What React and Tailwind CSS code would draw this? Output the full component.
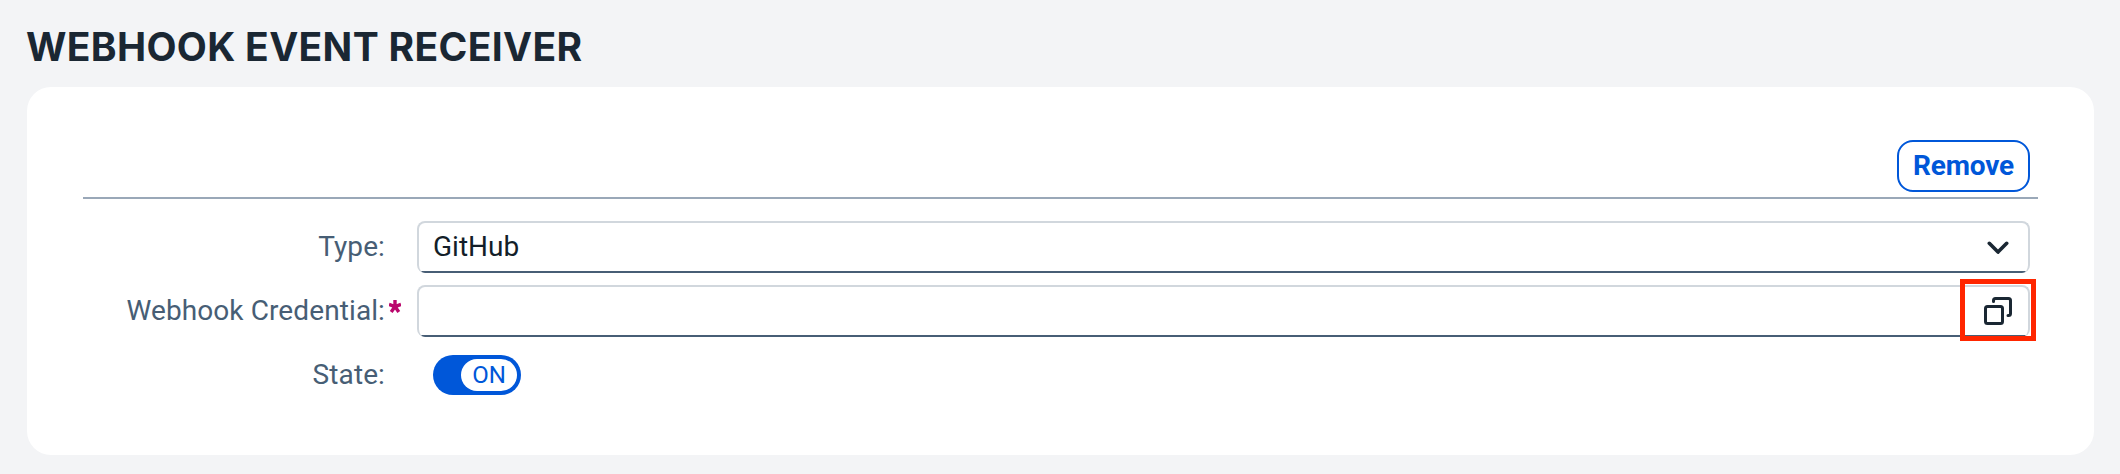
function FormRow({ label, required, children }) {
  return (
    <div className="flex h-16 items-center">
      <div className="relative flex w-[302px] shrink-0 justify-end text-[28px] leading-8 tracking-[0.1px] text-[#475e75]">
        <span className="whitespace-nowrap">{label}</span>
        {required && (
          <svg className="absolute top-[5px] left-[306px]" width="12" height="13" viewBox="0 0 12 13" fill="none" stroke="#ba066c" strokeWidth="3.4">
            <path d="M6 0v6.6M0 4.4l6 2.2M12 4.4l-6 2.2M2.2 12L6 6.6M9.8 12L6 6.6" />
          </svg>
        )}
      </div>
      <div className="ml-[32px] flex grow items-center">{children}</div>
    </div>
  );
}

function Field({ children }) {
  return (
    <div className="relative mr-2 flex h-[52px] grow items-center justify-between overflow-hidden rounded-[8px] border-2 border-b-0 border-[#d1d7dd] bg-white pr-[19px] pl-[14px] text-[28px] leading-8 text-[#131e29] after:absolute after:right-0 after:bottom-0 after:left-0 after:h-[2px] after:bg-[#475e75]">
      {children}
    </div>
  );
}

export default function App() {
  return (
    <div className="flex h-[474px] w-[2120px] flex-col bg-[#f3f4f6] pt-[23px] pl-[27px] font-['Roboto',sans-serif]">
      <h1 className="-ml-px h-16 font-['Inter',sans-serif] text-[39px] leading-[48px] font-bold tracking-[0.33px] whitespace-nowrap text-[#1a2733]">
        WEBHOOK EVENT RECEIVER
      </h1>
      <main className="flex h-[368px] w-[2067px] flex-col rounded-[24px] bg-white pt-[53px] pr-14 pl-[56px]">
        <div className="flex h-[59px] justify-end border-b-2 border-[#9aa8b8] pr-2">
          <button className="flex h-[52px] w-[133px] items-center justify-center rounded-[16px] border-2 border-[#0057d9] text-[28px] leading-8 font-bold tracking-[-0.2px] text-[#0057d9]">
            Remove
          </button>
        </div>
        <div className="flex flex-col pt-4">
          <FormRow label="Type:">
            <Field>
              <span className="-mt-[2px]">GitHub</span>
              <svg width="22" height="14" viewBox="0 0 22 14" fill="none" stroke="#1a2733" strokeWidth="3.6" strokeLinecap="round" strokeLinejoin="round">
                <path d="M2.3 2.3l8.7 8.8 8.7-8.8" />
              </svg>
            </Field>
          </FormRow>
          <FormRow label="Webhook Credential:" required>
            <div className="relative flex grow">
              <Field />
              <div className="absolute -top-[6px] right-[2px] flex h-[62px] w-[76px] items-center justify-center border-5 border-[#ff2600] pt-[2px]">
                <svg width="28" height="28" viewBox="0 0 28 28" fill="none" stroke="#1a2733" strokeWidth="3" strokeLinecap="round" strokeLinejoin="round">
                  <rect x="1.5" y="9.5" width="17" height="17" rx="2" />
                  <path d="M9.5 4.5V3.5a2 2 0 0 1 2-2H24.500a2 2 0 0 1 2 2V16.500a2 2 0 0 1-2 2H24" />
                </svg>
              </div>
            </div>
          </FormRow>
          <FormRow label="State:">
            <div className="ml-4 flex h-10 w-[88px] justify-end rounded-full bg-[#0057d9] p-1">
              <span className="flex h-8 w-[56px] items-center justify-center rounded-full bg-white text-[24px] leading-8 text-[#0057d9]">ON</span>
            </div>
          </FormRow>
        </div>
      </main>
    </div>
  );
}
